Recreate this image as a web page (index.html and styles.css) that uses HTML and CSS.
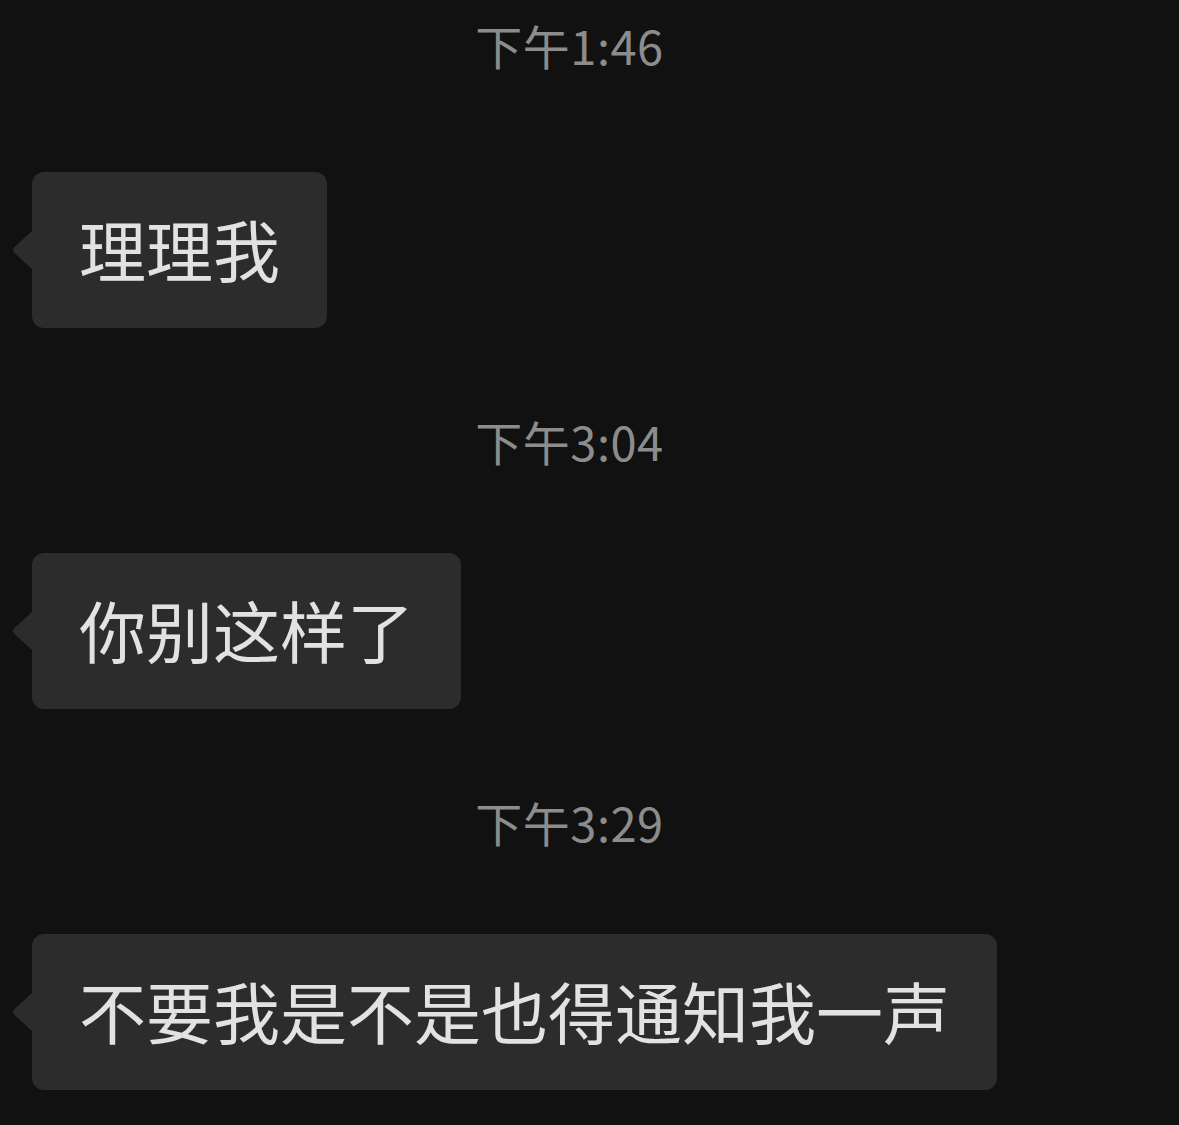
FILE: index.html
```html
<!DOCTYPE html>
<html lang="zh-CN">
<head>
    <meta charset="UTF-8">
    <title>聊天</title>
    <link rel="stylesheet" href="styles.css">
</head>
<body>

    <div class="chat">
        <div class="time first">下午1:46</div>
        <div class="msg">
            <div class="bubble">
                <svg class="tail" width="22" height="40" viewBox="0 0 22 40"><path d="M22 0 L3.5 17 Q0.5 20 3.5 23 L22 40 Z" fill="#2c2c2c"/></svg>
                理理我
            </div>
        </div>

        <div class="time">下午3:04</div>
        <div class="msg">
            <div class="bubble">
                <svg class="tail" width="22" height="40" viewBox="0 0 22 40"><path d="M22 0 L3.5 17 Q0.5 20 3.5 23 L22 40 Z" fill="#2c2c2c"/></svg>
                你别这样了
            </div>
        </div>

        <div class="time">下午3:29</div>
        <div class="msg">
            <div class="bubble">
                <svg class="tail" width="22" height="40" viewBox="0 0 22 40"><path d="M22 0 L3.5 17 Q0.5 20 3.5 23 L22 40 Z" fill="#2c2c2c"/></svg>
                不要我是不是也得通知我一声
            </div>
        </div>
    </div>

</body>
</html>
```

FILE: styles.css
```css
body{
    margin: 0;
    background-color: #111111;
    font-family: "Noto Sans CJK SC", "Noto Sans", sans-serif;
}
.chat{
    display: flex;
    flex-direction: column;
    padding: 0 0 0 32px;
}
.time{
    height: 60px;
    line-height: 60px;
    margin: 83px 0 82px;
    padding-right: 72px;
    text-align: center;
    font-size: 47px;
    letter-spacing: 0.5px;
    color: #8c8c8c;
}
.time.first{
    margin-top: 15px;
    margin-bottom: 97px;
}
.msg{
    display: flex;
}
.bubble{
    position: relative;
    height: 156px;
    box-sizing: border-box;
    display: flex;
    align-items: center;
    padding: 0 47px 6px 47px;
    background-color: #2c2c2c;
    border-radius: 12px;
    font-size: 67px;
    color: #e2e2e2;
    white-space: nowrap;
}
.tail{
    position: absolute;
    left: -21px;
    top: 50%;
    transform: translateY(-50%);
}
```
